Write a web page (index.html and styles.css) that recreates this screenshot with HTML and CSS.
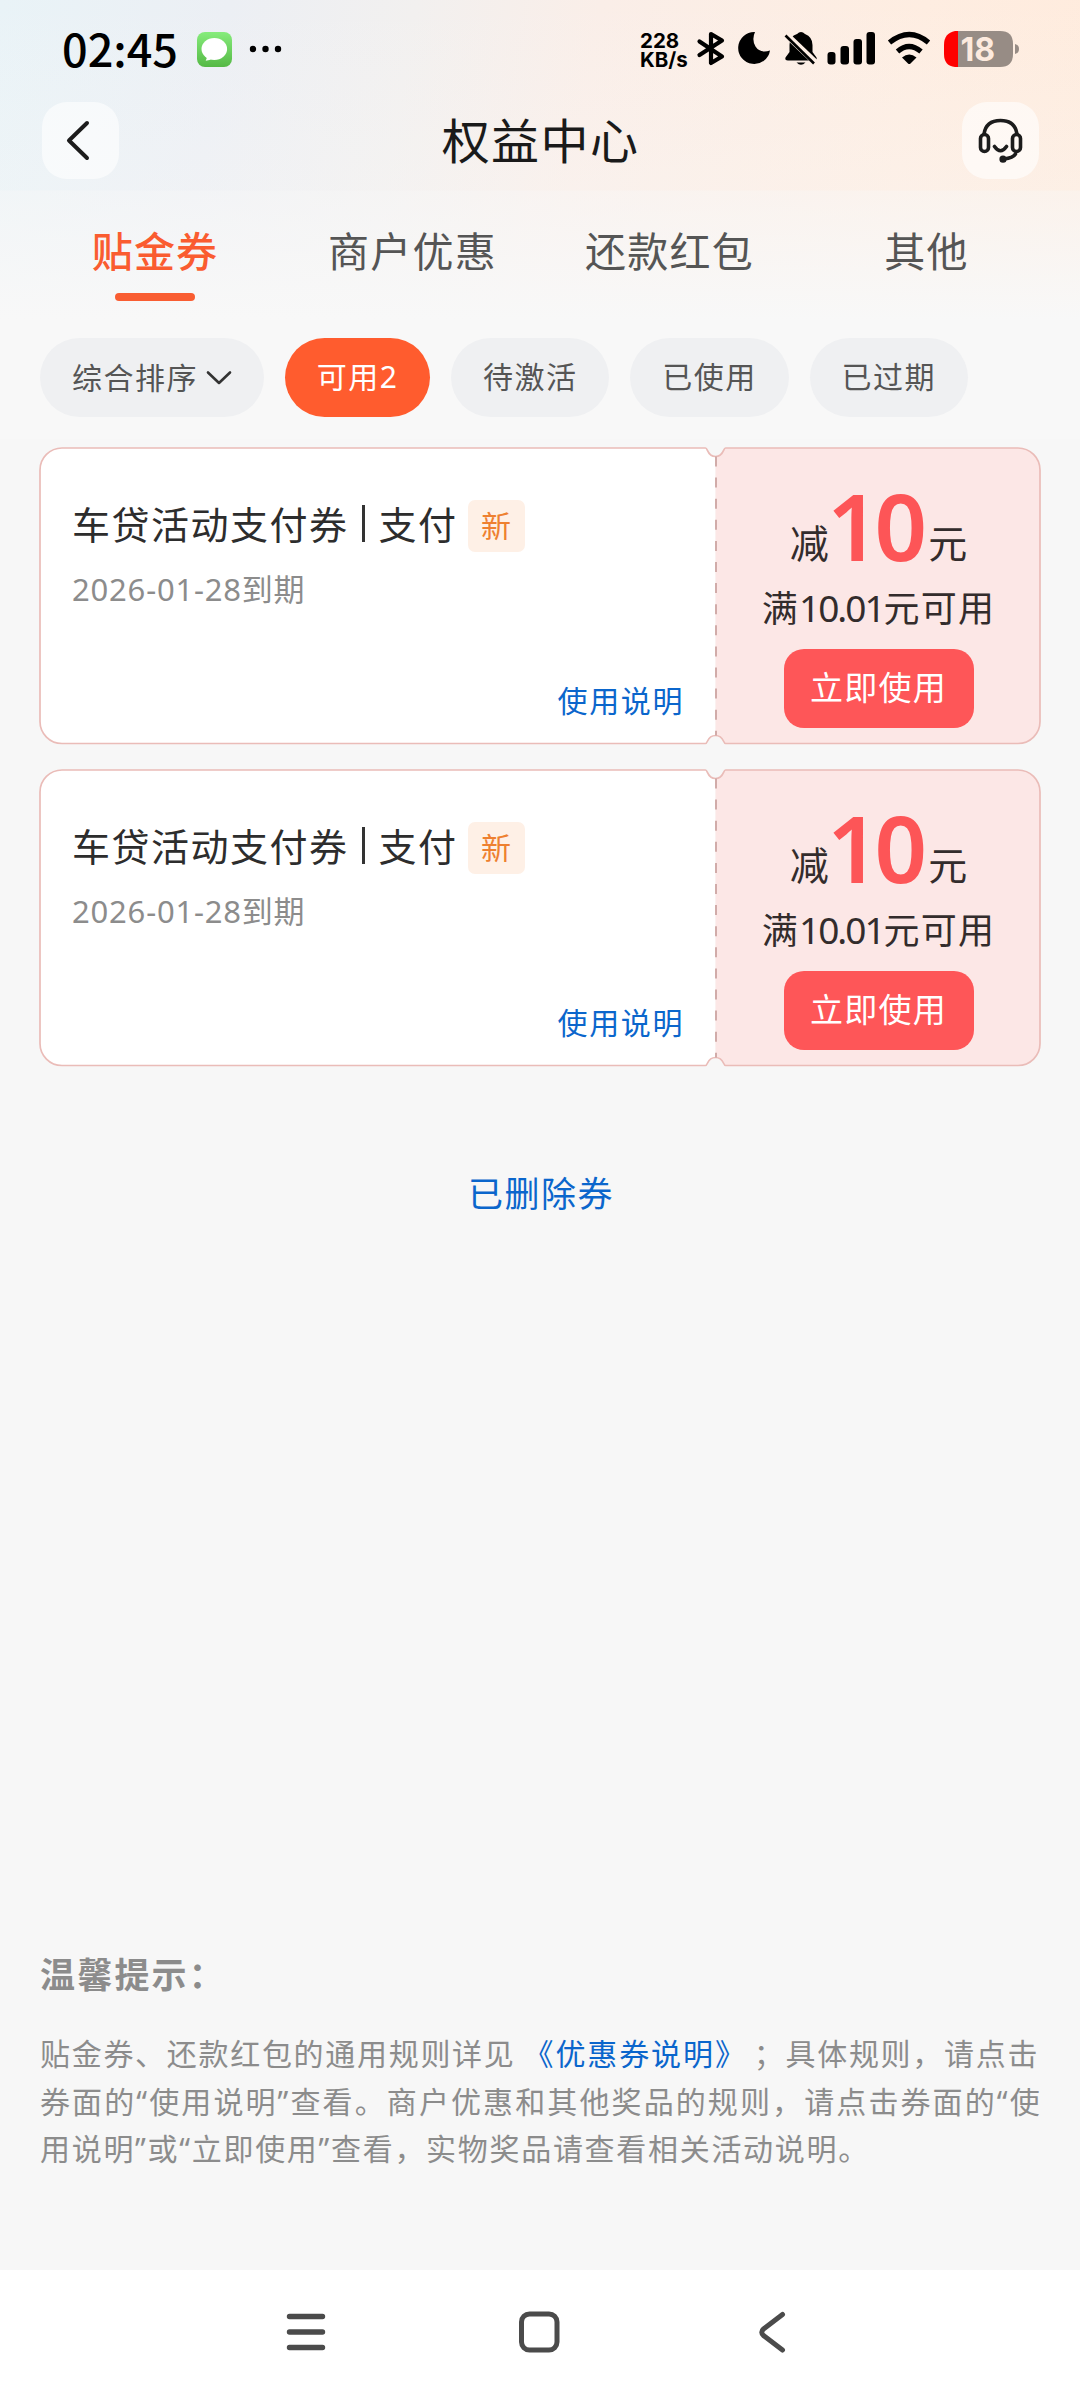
FILE: index.html
```html
<!DOCTYPE html>
<html lang="zh-CN">
<head>
<meta charset="utf-8">
<title>权益中心</title>
<link rel="stylesheet" href="styles.css">
</head>
<body>
<div class="screen">
  <header class="top">
    <div class="status">
      <span class="clock">02:45</span>
      <svg class="msg" width="35" height="35" viewBox="0 0 35 35"><defs><linearGradient id="g" x1="0" y1="0" x2="0" y2="1"><stop offset="0" stop-color="#86ec7c"/><stop offset="1" stop-color="#55b945"/></linearGradient></defs><rect width="35" height="35" rx="8" fill="url(#g)"/><ellipse cx="17.3" cy="17" rx="12.8" ry="11" fill="#fff"/><path d="M9.5 23q1 3.500-.8 5.800 4.500-.3 7.300-3z" fill="#fff"/></svg>
      <svg class="dots" width="34" height="8" viewBox="0 0 34 8"><circle cx="4" cy="4" r="3.200"/><circle cx="16.500" cy="4" r="3.200"/><circle cx="29" cy="4" r="3.200"/></svg>
      <span class="speed"><b>228</b><b>KB/s</b></span>
      <svg class="sysicons" width="390" height="40" viewBox="690 29 390 40">
        <path d="M699.500 41.500L722 56.500 711 63V34L722 40.500 699.500 55" fill="none" stroke="#000" stroke-width="4.200" stroke-linecap="round" stroke-linejoin="round"/>
        <path d="M755 32A16 16 0 1 0 770 50.500Q760 53.500 755.500 46.500 751.500 39.500 755 32z"/>
        <path d="M788 60.500Q784.500 60.500 785.500 57.500L789.500 52V45Q789.500 36 797 34 801 30 805 34 812.500 37 812.500 45V52L816.500 57.500Q817.500 60.500 814 60.500zM796.500 62.500H805.500Q801 67 796.500 62.500z"/>
        <path d="M785 33.500L817 64" stroke="#fdeee4" stroke-width="6.500"/><path d="M785.500 35.500L814 63.500" stroke="#000" stroke-width="2.600"/>
        <rect x="827.500" y="52" width="8" height="12.500" rx="3"/><rect x="840.500" y="46" width="8.500" height="18.500" rx="3"/><rect x="853.500" y="39" width="8.500" height="25.500" rx="3"/><rect x="866.500" y="32" width="8.500" height="32.500" rx="3"/>
        <path d="M889.500 42.500Q909.500 26.500 928.500 42.500M897.500 51.500Q909 41.500 921 51.500" fill="none" stroke="#000" stroke-width="5.200"/>
        <path d="M902 57.500Q909.300 51.500 916.500 57.500L910.500 63.500Q909.300 64.500 908 63.500z"/>
        <path d="M957.500 31H1000Q1013 31 1013 44V54Q1013 67 1000 67H957.500z" fill="#978c85"/>
        <path d="M958 31H955Q944 33 944 45V54Q944 66 955 67H958z" fill="#fe0000"/>
        <path d="M1015 44Q1019 45 1019 49T1015 54z" fill="#978c85"/>
        <text class="pct" x="960.500" y="60.800">18</text>
      </svg>
    </div>
    <div class="bar">
      <span class="sq"><svg width="77" height="77" viewBox="0 0 77 77" fill="none" stroke="#1c1c1c" stroke-width="4" stroke-linecap="round" stroke-linejoin="round"><path d="M45 21L27 38.500 45 56"/></svg></span>
      <h1>权益中心</h1>
      <span class="sq"><svg width="77" height="77" viewBox="0 0 77 77" fill="none" stroke="#1c1c1c" stroke-width="3.600" stroke-linecap="round" stroke-linejoin="round"><rect x="18.500" y="32.500" width="8" height="17" rx="4"/><rect x="50.500" y="32.500" width="8" height="17" rx="4"/><path d="M22 32Q24 18.500 38.500 18.500T55 32M32.500 44.500Q38.500 53 44.500 44.500M53.500 52Q51 56 42 57"/><circle cx="41" cy="57.200" r="1.800"/></svg></span>
    </div>
    <nav class="tabs"><span class="tab on">贴金券</span><span class="tab">商户优惠</span><span class="tab">还款红包</span><span class="tab">其他</span></nav>
    <div class="chips">
      <span class="chip sort">综合排序<svg width="26" height="16" viewBox="0 0 26 16" fill="none" stroke="#333" stroke-width="2.600" stroke-linecap="round" stroke-linejoin="round"><path d="M2 2.500L13 13 24 2.500"/></svg></span>
      <span class="chip on">可用2</span><span class="chip">待激活</span><span class="chip">已使用</span><span class="chip">已过期</span>
    </div>
  </header>
  <main>
    <section class="coupon">
      <svg class="frame" width="1002" height="298" viewBox="0 0 1002 298"><path d="M23 1H666.500C669 1 668 9.500 676.500 9.500V288.500C668 288.500 669 296.500 666.500 296.500H23A22 22 0 0 1 1 274.500V23A22 22 0 0 1 23 1z" fill="#fff"/><path d="M676.500 9.500C685 9.500 684 1 686.500 1H979A22 22 0 0 1 1001 23V274.500A22 22 0 0 1 979 296.500H686.500C684 296.500 685 288.500 676.500 288.500z" fill="#fce7e6"/><path d="M23 1H666.500C669 1 668 9.500 676.500 9.500S684 1 686.500 1H979A22 22 0 0 1 1001 23V274.500A22 22 0 0 1 979 296.500H686.500C684 296.500 685 288.500 676.500 288.500S669 296.500 666.500 296.500H23A22 22 0 0 1 1 274.500V23A22 22 0 0 1 23 1z" fill="none" stroke="#eabcb8" stroke-width="1.700"/><path d="M677 9.500V288.500" stroke="#cda5a2" stroke-width="1.800" stroke-dasharray="10 11.100"/></svg>
      <div class="info"><div class="name"><span>车贷活动支付券</span><i></i><span>支付</span><em>新</em></div><div class="date">2026-01-28到期</div><a class="how">使用说明</a></div>
      <div class="value"><div class="amount">减<strong>10</strong>元</div><div class="cond">满<span>10.01</span>元可用</div><a class="use">立即使用</a></div>
    </section>
    <section class="coupon">
      <svg class="frame" width="1002" height="298" viewBox="0 0 1002 298"><path d="M23 1H666.500C669 1 668 9.500 676.500 9.500V288.500C668 288.500 669 296.500 666.500 296.500H23A22 22 0 0 1 1 274.500V23A22 22 0 0 1 23 1z" fill="#fff"/><path d="M676.500 9.500C685 9.500 684 1 686.500 1H979A22 22 0 0 1 1001 23V274.500A22 22 0 0 1 979 296.500H686.500C684 296.500 685 288.500 676.500 288.500z" fill="#fce7e6"/><path d="M23 1H666.500C669 1 668 9.500 676.500 9.500S684 1 686.500 1H979A22 22 0 0 1 1001 23V274.500A22 22 0 0 1 979 296.500H686.500C684 296.500 685 288.500 676.500 288.500S669 296.500 666.500 296.500H23A22 22 0 0 1 1 274.500V23A22 22 0 0 1 23 1z" fill="none" stroke="#eabcb8" stroke-width="1.700"/><path d="M677 9.500V288.500" stroke="#cda5a2" stroke-width="1.800" stroke-dasharray="10 11.100"/></svg>
      <div class="info"><div class="name"><span>车贷活动支付券</span><i></i><span>支付</span><em>新</em></div><div class="date">2026-01-28到期</div><a class="how">使用说明</a></div>
      <div class="value"><div class="amount">减<strong>10</strong>元</div><div class="cond">满<span>10.01</span>元可用</div><a class="use">立即使用</a></div>
    </section>
    <a class="deleted">已删除券</a>
  </main>
  <footer class="tips">
    <h2>温馨提示：</h2>
    <p class="first">贴金券、还款红包的通用规则详见<a>《优惠券说明》</a><span class="semi">；</span>具体规则，请点击</p>
    <p>券面的“使用说明”查看。商户优惠和其他奖品的规则，请点击券面的“使</p>
    <p class="last">用说明”或“立即使用”查看，实物奖品请查看相关活动说明。</p>
  </footer>
  <nav class="sysnav">
    <svg width="44" height="44" viewBox="0 0 44 44" fill="none" stroke="#4b4b4b" stroke-width="5.400" stroke-linecap="round"><path d="M5.500 6.500H38.500M5.500 22H38.500M5.500 37.500H38.500"/></svg>
    <svg width="44" height="44" viewBox="0 0 44 44" fill="none" stroke="#4b4b4b" stroke-width="5"><rect x="5.500" y="4" width="35.500" height="36" rx="8"/></svg>
    <svg width="44" height="44" viewBox="0 0 44 44" fill="none" stroke="#4b4b4b" stroke-width="5" stroke-linecap="round"><path d="M35.500 4.500L16.500 19Q13 22 16.500 25.500L35.500 40"/></svg>
  </nav>
</div>
</body>
</html>
```
FILE: styles.css
```css
* { box-sizing: border-box; margin: 0; padding: 0; }
body { background: #f7f7f7; font-family: "Noto Sans", "Noto Sans CJK SC", sans-serif; color: #333; }
.screen { width: 1080px; height: 2400px; display: flex; flex-direction: column; }
.top {
  height: 439px; flex: none;
  background:
    linear-gradient(180deg, rgba(248,248,248,0) 0, rgba(248,248,248,.3) 190px, rgba(248,248,248,.55) 191px, #f8f8f8 320px),
    linear-gradient(100deg, #e9f3f7 0, #eceff4 20%, #f2f0ef 36%, #faeee8 52%, #feede1 80%, #ffebdc 100%);
}
.status { height: 102px; padding: 29px 0 0 62px; display: flex; align-items: flex-start; }
.clock { width: 135px; font: 500 45px/38px "Noto Sans CJK SC", sans-serif; letter-spacing: 0; color: #000; white-space: nowrap; }
.msg { margin-top: 3px; }
.dots { margin: 16px 0 0 17px; }
.speed { width: 50px; margin: 2px 0 0 357px; display: flex; flex-direction: column; font: 700 20.500px/19px Inter, sans-serif; color: #000; }
.speed b { font-weight: 650; white-space: nowrap; }
.sysicons { flex: none; }
.pct { font: 700 32px Inter, sans-serif; fill: #fdeade; }
.bar { height: 77px; padding: 0 41px 0 42px; display: flex; justify-content: space-between; align-items: center; }
.bar h1 { font-size: 48px; line-height: 76px; font-weight: 400; letter-spacing: 1.4px; color: #1a1a1a; }
.sq { width: 77px; height: 77px; border-radius: 25px; background: rgba(255,255,255,.6); }
.tabs { height: 122px; padding: 34px 26px 0; display: grid; grid-template-columns: repeat(4, 1fr); justify-items: center; }
.tab { padding-left: 2px; font-size: 41px; line-height: 76px; letter-spacing: 1.2px; color: #555; }
.tab.on { height: 88px; padding-left: 1px; color: #fa5c30; font-weight: 500; display: flex; flex-direction: column; align-items: center; }
.tab.on::after { content: ""; width: 80px; height: 8px; margin-top: 4px; border-radius: 4px; background: #f95d32; }
.chips { padding: 37px 40px 0; display: flex; gap: 21px; }
.chip { width: 158.300px; height: 79px; border-radius: 40px; background: #eff0f2; font-size: 30px; line-height: 77px; letter-spacing: 1.500px; text-align: center; color: #555; }
.chip.sort { width: 224px; padding-left: 32px; display: flex; align-items: center; gap: 8px; }
.chip.on { width: 145px; background: #ff5c2e; color: #fff; }
main { padding: 8px 39px 0; display: flex; flex-direction: column; align-items: center; }
.coupon { position: relative; width: 1002px; height: 298px; margin-bottom: 24px; display: flex; }
.frame { position: absolute; left: 0; top: 0; }
.info { position: relative; width: 677px; padding: 53px 32px 0 33px; display: flex; flex-direction: column; }
.name { height: 52px; display: flex; align-items: center; font-size: 38px; line-height: 48px; letter-spacing: 1.500px; color: #2d2d2d; }
.name span { margin-top: -5px; }
.name i { width: 3px; height: 37px; margin: -6px 14px 0 13px; background: #333; }
.name em { width: 57px; height: 52px; margin-left: 10px; border-radius: 7px; background: #fef0e6; color: #ee8030; font-style: normal; font-size: 30px; line-height: 51px; text-align: center; letter-spacing: 0; }
.date { margin-top: 17px; font-size: 31px; line-height: 40px; letter-spacing: .8px; color: #8c8c8c; }
.how { align-self: flex-end; margin-top: 72px; font-size: 30px; line-height: 40px; letter-spacing: 1.600px; color: #0b66cc; }
.value { position: relative; width: 325px; padding-top: 27px; display: flex; flex-direction: column; align-items: center; }
.amount { height: 97px; display: flex; align-items: baseline; font-size: 39px; line-height: 97px; color: #332c2c; }
.amount strong { margin: 0 6px 0 -2px; font-size: 92px; font-weight: 650; letter-spacing: -5px; color: #fd5557; transform: translateY(3px); }
.cond { margin-top: 16px; font-size: 36px; line-height: 42px; letter-spacing: 1.200px; color: #332c2c; white-space: nowrap; }
.cond span { font-size: 37px; letter-spacing: -2px; }
.use { width: 190px; height: 79px; margin-top: 19px; border-radius: 20px; background: #fe5658; color: #fff; font-size: 33px; line-height: 78px; letter-spacing: 1.200px; text-align: center; }
.deleted { margin-top: 80px; padding-left: 2px; font-size: 35px; line-height: 46px; letter-spacing: 1.500px; color: #0b66cc; }
.tips { margin-top: auto; height: 319px; padding: 0 39px 0 40px; color: #8c8c8c; }
.tips h2 { font-size: 35px; line-height: 48px; letter-spacing: 2.200px; font-weight: 600; margin-bottom: 31px; }
.tips p { font-size: 30px; line-height: 47.700px; letter-spacing: 1.300px; text-align: justify; text-align-last: justify; white-space: nowrap; }
.tips p.first { text-align-last: left; letter-spacing: 1.700px; }
.tips p.last { text-align-last: left; letter-spacing: 1.700px; }
.tips a { margin: 0 10px 0 8px; letter-spacing: 1.900px; color: #0b66cc; }
.semi { margin-left: 12px; }
.sysnav { height: 130px; flex: none; background: #fff; padding: 40px 289px 0 284px; display: flex; justify-content: space-between; }
```
